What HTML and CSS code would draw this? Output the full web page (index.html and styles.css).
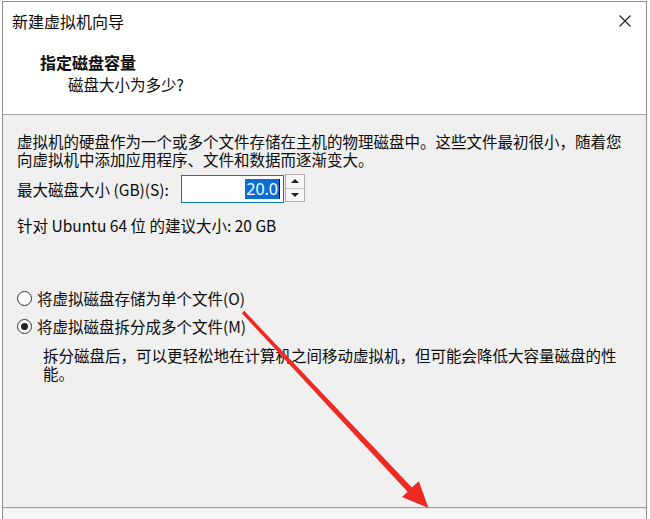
FILE: index.html
```html
<!DOCTYPE html>
<html lang="zh-CN">
<head>
<meta charset="utf-8">
<title>新建虚拟机向导</title>
<link rel="stylesheet" href="styles.css">
</head>
<body>
<div class="window">
  <div class="top">
    <div class="titlebar">
      <span class="title">新建虚拟机向导</span>
      <svg class="close" width="12" height="12" viewBox="0 0 12 12"><path d="M0.5 0.5L11.5 11.5M11.5 0.5L0.5 11.5" stroke="#222" stroke-width="1.2" fill="none"/></svg>
    </div>
    <div class="header">
      <div class="h-title">指定磁盘容量</div>
      <div class="h-sub">磁盘大小为多少?</div>
    </div>
  </div>
  <div class="content">
    <p class="intro">虚拟机的硬盘作为一个或多个文件存储在主机的物理磁盘中。这些文件最初很小，随着您向虚拟机中添加应用程序、文件和数据而逐渐变大。</p>
    <div class="size-row">
      <span class="label">最大磁盘大小 (GB)(S):</span>
      <div class="input"><span class="sel">20.0</span><span class="caret"></span></div>
      <div class="spin">
        <div class="spin-btn"><span class="tri up"></span></div>
        <div class="spin-btn"><span class="tri down"></span></div>
      </div>
    </div>
    <p class="recommend">针对 Ubuntu 64 位 的建议大小: 20 GB</p>
    <div class="radio-row first"><span class="radio"></span><span>将虚拟磁盘存储为单个文件(O)</span></div>
    <div class="radio-row"><span class="radio checked"></span><span>将虚拟磁盘拆分成多个文件(M)</span></div>
    <p class="desc">拆分磁盘后，可以更轻松地在计算机之间移动虚拟机，但可能会降低大容量磁盘的性能。</p>
  </div>
  <div class="footer"></div>
  <svg class="arrow" width="650" height="519" viewBox="0 0 650 519">
    <polygon points="241.8,313.2 244.2,310.8 411.9,487.6 418.8,481.2 428.5,508 402.0,497.0 407.6,491.8" fill="#ee2a24"/>
  </svg>
</div>
</body>
</html>
```
FILE: styles.css
```css
html, body {
  margin: 0;
  padding: 0;
  background: #ffffff;
}
body {
  width: 650px;
  height: 519px;
  overflow: hidden;
  font-family: "Noto Sans CJK SC", "Noto Sans", sans-serif;
  color: #0a0a0a;
}
.window {
  margin: 1px 3px 0 2px;
  height: 518px;
  border: 1px solid #8c8c8c;
  border-bottom: none;
  box-sizing: border-box;
  display: flex;
  flex-direction: column;
  overflow: hidden;
}
.top {
  background: #ffffff;
  border-bottom: 1px solid #a3a3a3;
}
.titlebar {
  height: 38px;
  display: flex;
  align-items: center;
  justify-content: space-between;
  padding: 0 15px 0 9px;
}
.title {
  font-size: 16px;
  line-height: 20px;
}
.header {
  height: 74px;
  padding: 11px 0 0 37px;
  box-sizing: border-box;
}
.h-title {
  font-size: 16px;
  font-weight: bold;
  line-height: 22px;
}
.h-sub {
  font-size: 15.5px;
  line-height: 22px;
  padding-left: 28px;
}
.content {
  height: 393px;
  background: #f0f0f0;
  padding: 17px 0 0 14px;
  box-sizing: border-box;
  border-bottom: 1px solid #a0a0a0;
  font-size: 15.5px;
  line-height: 18px;
}
.intro {
  margin: 0;
  width: 608px;
}
.size-row {
  display: flex;
  align-items: center;
  height: 28px;
  margin-top: 7px;
}
.label {
  width: 164px;
}
.input {
  width: 103px;
  height: 28px;
  box-sizing: border-box;
  border: 1px solid #0a74d2;
  background: #ffffff;
  display: flex;
  align-items: center;
  justify-content: flex-end;
  padding-right: 3px;
}
.sel {
  background: #0a6fd0;
  color: #ffffff;
  font-family: "Noto Sans", sans-serif;
  font-size: 16px;
  line-height: 20px;
  padding: 0 1px;
}
.caret {
  width: 1px;
  height: 20px;
  background: #000;
}
.spin {
  width: 20px;
  height: 28px;
  margin-left: 1px;
  margin-top: -2px;
  box-sizing: border-box;
  border: 1px solid #adadad;
  display: flex;
  flex-direction: column;
  background: #f7f7f7;
}
.spin-btn {
  flex: 1;
  display: flex;
  align-items: center;
  justify-content: center;
}
.spin-btn + .spin-btn {
  border-top: 1px solid #c4c4c4;
}
.tri {
  width: 0;
  height: 0;
  border-left: 4px solid transparent;
  border-right: 4px solid transparent;
}
.tri.up { border-bottom: 4px solid #222; }
.tri.down { border-top: 4px solid #222; }
.recommend {
  margin: 13px 0 0;
}
.radio-row {
  display: flex;
  align-items: center;
  height: 20px;
  margin-top: 8px;
}
.radio-row.first {
  margin-top: 54px;
}
.radio {
  width: 15px;
  height: 15px;
  box-sizing: border-box;
  border: 1px solid #333;
  border-radius: 50%;
  background: #fff;
  margin-right: 5px;
  display: flex;
  align-items: center;
  justify-content: center;
}
.radio.checked::after {
  content: "";
  width: 7px;
  height: 7px;
  border-radius: 50%;
  background: #222;
}
.desc {
  margin: 10px 0 0 26px;
  width: 580px;
}
.footer {
  flex: 1;
  background: #f6f6f6;
  border-top: 1px solid #e4e4e4;
}
.arrow {
  position: absolute;
  left: 0;
  top: 0;
  pointer-events: none;
}
```
